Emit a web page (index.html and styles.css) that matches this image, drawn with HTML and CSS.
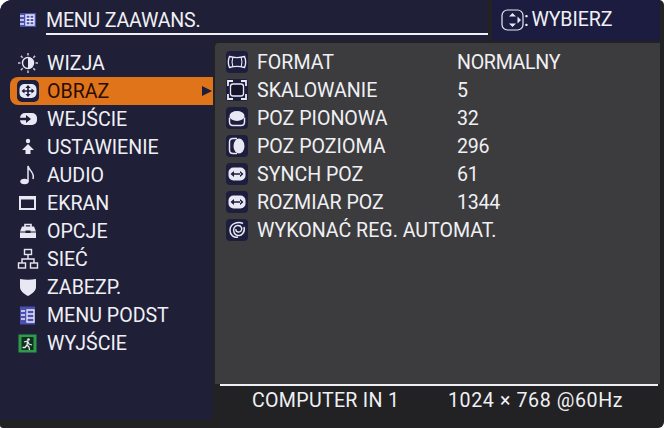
FILE: index.html
```html
<!DOCTYPE html>
<html lang="pl">
<head>
<meta charset="utf-8">
<title>MENU ZAAWANS.</title>
<link rel="stylesheet" href="styles.css">
</head>
<body>
<div class="osd">
  <header class="top">
    <div class="title">
      <svg class="ic" viewBox="0 0 22 22"><rect x="3" y="4" width="16" height="14" fill="#4a4fb0"/><path d="M9 6h8v10H9zM3 7h4M3 11h4M3 15h4" fill="none" stroke="#e8e8f4" stroke-width="1.4"/><path d="M9 9.300h8M9 12.600h8M13 6v10" stroke="#e8e8f4" stroke-width="1.200"/></svg>
      <span class="title-text">MENU ZAAWANS.</span>
    </div>
    <div class="hint">
      <svg class="joy" viewBox="0 0 24 22"><rect x="1" y="1" width="21" height="20" rx="5.500" fill="none" stroke="#e8e8f4" stroke-width="1.200"/><path d="M11.500 4l3.500 3.500H8zM11.500 18L8 14.500h7zM16.500 7.500l3.500 3.500-3.500 3.500z" fill="#e8e8f4"/></svg>
      <span class="hint-text">: WYBIERZ</span>
    </div>
  </header>
  <div class="body">
    <nav class="side">
      <div class="mi"><svg class="ic" viewBox="0 0 22 22"><circle cx="11" cy="11" r="5.500" fill="#1f1f38" stroke="#e8e8f4" stroke-width="1.400"/><path d="M11 5.500a5.500 5.500 0 0 1 0 11z" fill="#e8e8f4"/><path d="M11 1v2.500M11 18.500V21M1 11h2.500M18.500 11H21M3.900 3.900l1.800 1.800M16.300 16.300l1.800 1.800M3.900 18.100l1.800-1.800M16.300 5.700l1.800-1.800" stroke="#c8c8d8" stroke-width="1.500"/></svg><span>WIZJA</span></div>
      <div class="mi active"><svg class="ic" viewBox="0 0 22 22"><rect width="22" height="22" rx="5" fill="#1d1d3d"/><rect x="2.500" y="4" width="17" height="14" rx="5" fill="#e8e8f4"/><path d="M11 5l2.600 3h-5.200zM11 17l2.600-3h-5.200zM4.500 11l3-2.600v5.200zM17.500 11l-3-2.600v5.200z" fill="#1d1d3d"/><path d="M7 11h8M11 7v8" stroke="#1d1d3d" stroke-width="1.600"/></svg><span>OBRAZ</span><span class="arrow"></span></div>
      <div class="mi"><svg class="ic" viewBox="0 0 22 22"><rect x="3" y="5" width="17" height="12" rx="5" fill="#e8e8f4"/><path d="M2 9.800h7V7l5 4-5 4v-2.800H2z" fill="#1f1f38"/></svg><span>WEJŚCIE</span></div>
      <div class="mi"><svg class="ic" viewBox="0 0 22 22"><circle cx="11" cy="5" r="2.200" fill="#e8e8f4"/><path d="M11 8l6 6h-3.500v4h-5v-4H5z" fill="#e8e8f4"/></svg><span>USTAWIENIE</span></div>
      <div class="mi"><svg class="ic" viewBox="0 0 22 22"><ellipse cx="7.500" cy="17.500" rx="4.200" ry="2.800" fill="#e8e8f4"/><path d="M11 17.500V2c1 5 7 6 5 13" fill="none" stroke="#e8e8f4" stroke-width="1.500"/></svg><span>AUDIO</span></div>
      <div class="mi"><svg class="ic" viewBox="0 0 22 22"><rect x="2" y="4" width="17" height="14" fill="#e8e8f4"/><rect x="4" y="7.500" width="13" height="8.500" fill="#1f1f38"/></svg><span>EKRAN</span></div>
      <div class="mi"><svg class="ic" viewBox="0 0 22 22"><path d="M8 7V4.500h6V7" fill="none" stroke="#e8e8f4" stroke-width="1.600"/><path d="M5 6.500h12l2 5H3z" fill="#e8e8f4"/><rect x="3" y="12.500" width="16" height="5.500" fill="#e8e8f4"/><rect x="8.500" y="10.500" width="5" height="2.500" fill="#1f1f38"/></svg><span>OPCJE</span></div>
      <div class="mi"><svg class="ic" viewBox="0 0 22 22" fill="none" stroke="#e8e8f4" stroke-width="1.400"><rect x="7.500" y="1.500" width="7" height="5"/><rect x="1.500" y="15" width="7" height="5"/><rect x="13.500" y="15" width="7" height="5"/><path d="M11 6.500v4.500M5 15v-4h12v4"/></svg><span>SIEĆ</span></div>
      <div class="mi"><svg class="ic" viewBox="0 0 22 22"><path d="M3 3c5 1 11 1 16 0v8c0 4-4 7-8 9-4-2-8-5-8-9z" fill="#e8e8f4"/></svg><span>ZABEZP.</span></div>
      <div class="mi"><svg class="ic" viewBox="0 0 22 22"><rect x="3" y="2.500" width="15" height="18" fill="#4a4fb0"/><path d="M10 6h7v12h-7zM10 10h7M10 14h7M4 7h4M4 11h4M4 15h4" fill="none" stroke="#e8e8f4" stroke-width="1.300"/></svg><span>MENU PODST</span></div>
      <div class="mi"><svg class="ic" viewBox="0 0 22 22"><rect x="1.500" y="2.500" width="18" height="18" fill="#2f9a4c"/><rect x="4.500" y="5" width="12" height="13" fill="#10301c"/><circle cx="11.500" cy="7.500" r="1.300" fill="#e8e8f4"/><path d="M7 10l3.500-1 1.500 3 3 1M10.500 9.500L10 13l2 2 .5 3M10 13l-2 2.500H5.500" fill="none" stroke="#e8e8f4" stroke-width="1.300"/></svg><span>WYJŚCIE</span></div>
    </nav>
    <main class="main">
      <section class="panel">
        <div class="row"><svg class="ic" viewBox="0 0 22 22"><rect width="22" height="22" rx="4" fill="#1d1d3d"/><path d="M3.500 5.500c5 1.500 10 1.500 15 0 1.500 3.500 1.500 7.500 0 11-5-1.500-10-1.500-15 0-1.500-3.500-1.500-7.500 0-11z" fill="none" stroke="#e8e8f4" stroke-width="1.400"/><path d="M6.800 6.500c-1 3-1 6 0 9M15.200 6.500c1 3 1 6 0 9" fill="none" stroke="#e8e8f4" stroke-width="1.100"/></svg><span class="name">FORMAT</span><span class="val">NORMALNY</span></div>
        <div class="row"><svg class="ic" viewBox="0 0 22 22"><rect width="22" height="22" rx="3" fill="#1d1d3d"/><rect x="4.500" y="5" width="13" height="12" rx="2.500" fill="#14142a" stroke="#e8e8f4" stroke-width="1.300"/><path d="M2 7V2h5M15 2h5v5M20 15v5h-5M7 20H2v-5" fill="none" stroke="#e8e8f4" stroke-width="1.800"/></svg><span class="name">SKALOWANIE</span><span class="val">5</span></div>
        <div class="row"><svg class="ic" viewBox="0 0 22 22"><rect width="22" height="22" rx="4" fill="#1d1d3d"/><path d="M3.500 10.500v4.500c0 2 1.500 3.500 3.500 3.500h8c2 0 3.500-1.500 3.500-3.500v-4.500" fill="#1d1d3d" stroke="#e8e8f4" stroke-width="1.500"/><ellipse cx="11" cy="9" rx="7.500" ry="5" fill="#e8e8f4"/></svg><span class="name">POZ PIONOWA</span><span class="val">32</span></div>
        <div class="row"><svg class="ic" viewBox="0 0 22 22"><rect width="22" height="22" rx="4" fill="#1d1d3d"/><path d="M11 3.500H7C5 3.500 3.500 5 3.500 7v8c0 2 1.500 3.500 3.500 3.500h4" fill="none" stroke="#e8e8f4" stroke-width="1.500"/><ellipse cx="13" cy="11" rx="5.500" ry="7.500" fill="#e8e8f4"/></svg><span class="name">POZ POZIOMA</span><span class="val">296</span></div>
        <div class="row"><svg class="ic" viewBox="0 0 22 22"><rect width="22" height="22" rx="4" fill="#1d1d3d"/><rect x="2.500" y="4.500" width="17" height="13" rx="5" fill="#e8e8f4"/><path d="M4.500 11l3.500-3v6zM17.500 11l-3.500-3v6zM7 10.200h8v1.600H7z" fill="#1d1d3d"/></svg><span class="name">SYNCH POZ</span><span class="val">61</span></div>
        <div class="row"><svg class="ic" viewBox="0 0 22 22"><rect width="22" height="22" rx="4" fill="#1d1d3d"/><rect x="2.500" y="4.500" width="17" height="13" rx="5" fill="#e8e8f4"/><path d="M4.500 11l3.500-3v6zM17.500 11l-3.500-3v6zM7 10.200h8v1.600H7z" fill="#1d1d3d"/></svg><span class="name">ROZMIAR POZ</span><span class="val">1344</span></div>
        <div class="row"><svg class="ic" viewBox="0 0 22 22"><rect width="22" height="22" rx="4" fill="#1d1d3d"/><path d="M17 4.500C12 2 4 4.500 4 11.500c0 4.500 4 7.500 8 6.500M18 8c1.500 5-2.500 9-5.500 8.500-4 0-6-4.500-4.500-7.500 1.500-3 6-3.500 7.500-.5 1 2.500-1 5-3.500 4.500-1.500-.3-2.500-1.500-2-3" fill="none" stroke="#e8e8f4" stroke-width="1.500"/></svg><span class="name wide">WYKONAĆ REG. AUTOMAT.</span></div>
      </section>
      <footer class="status">
        <span class="src">COMPUTER IN 1</span>
        <span class="res">1024 × 768 @60Hz</span>
      </footer>
    </main>
  </div>
</div>
</body>
</html>
```

FILE: styles.css
```css
* { box-sizing: border-box; }
html, body { margin: 0; padding: 0; background: #fff; }
body { width: 664px; height: 428px; overflow: hidden; font-family: Roboto, "Liberation Sans", sans-serif; color: #f0f0f4; font-size: 19.600px; }
.osd { width: 664px; height: 428px; display: flex; flex-direction: column; background: #222224; border-radius: 12px 5px 6px 3px; overflow: hidden; }
.top { height: 41px; display: flex; flex: none; }
.title { width: 488px; background: #1f1f38; display: flex; align-items: flex-start; gap: 7px; padding: 9px 0 0 18px; flex: none; }
.title .ic { margin-left: -1px; }
.title-text { flex: 1; height: 26px; line-height: 23px; border-bottom: 2px solid #f0f0f4; letter-spacing: -0.200px; }
.hint { width: 168px; margin-left: 4px; background: #1c1c40; display: flex; align-items: flex-start; padding: 9px 0 0 9px; }
.joy { width: 24px; height: 22px; flex: none; }
.hint-text { line-height: 22px; margin-left: -1px; letter-spacing: -0.100px; word-spacing: -2px; }
.body { flex: 1; display: flex; min-height: 0; }
.side { width: 213px; height: 379px; flex: none; background: #1f1f38; padding: 8px 0 0 10px; display: flex; flex-direction: column; }
.ic { width: 22px; height: 22px; flex: none; }
.mi { height: 28px; display: flex; align-items: center; gap: 8px; padding-left: 7px; border-radius: 8px 0 0 8px; position: relative; }
.mi.active { background: #e0741b; color: #2a0c04; }
.arrow { position: absolute; right: 1px; top: 9px; width: 0; height: 0; border-left: 10px solid #1d1d3d; border-top: 5px solid transparent; border-bottom: 5px solid transparent; }
.main { flex: 1; display: flex; flex-direction: column; min-width: 0; padding: 2px 4px 0 2px; }
.panel { height: 341px; flex: none; background: #3c3c3e; padding: 5px 0 0 11px; border-radius: 4px 0 0 0; }
.row { height: 28px; display: flex; align-items: center; }
.name { width: 209px; padding-left: 9px; flex: none; }
.wide { width: auto; }
.val { letter-spacing: -0.300px; }
.status { margin: 0 2px 0 5px; border-top: 2px solid #f0f0f4; display: flex; padding: 2px 0 0 32px; line-height: 26px; }
.src { width: 196px; flex: none; letter-spacing: 0.300px; }
.res { letter-spacing: 0.600px; }
```
